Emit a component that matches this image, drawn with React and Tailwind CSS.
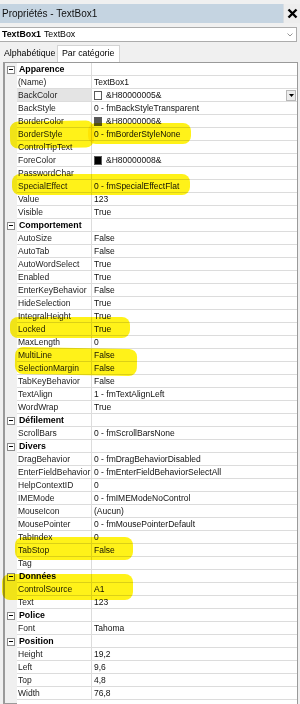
import React from "react";

const sections = [
  {
    title: "Apparence",
    rows: [
      { name: "(Name)", value: "TextBox1" },
      { name: "BackColor", value: "&H80000005&", swatch: "bg-white", shaded: true, dropdown: true },
      { name: "BackStyle", value: "0 - fmBackStyleTransparent" },
      { name: "BorderColor", value: "&H80000006&", swatch: "bg-[#585858]" },
      { name: "BorderStyle", value: "0 - fmBorderStyleNone" },
      { name: "ControlTipText", value: "" },
      { name: "ForeColor", value: "&H80000008&", swatch: "bg-black" },
      { name: "PasswordChar", value: "" },
      { name: "SpecialEffect", value: "0 - fmSpecialEffectFlat" },
      { name: "Value", value: "123" },
      { name: "Visible", value: "True" },
    ],
  },
  {
    title: "Comportement",
    rows: [
      { name: "AutoSize", value: "False" },
      { name: "AutoTab", value: "False" },
      { name: "AutoWordSelect", value: "True" },
      { name: "Enabled", value: "True" },
      { name: "EnterKeyBehavior", value: "False" },
      { name: "HideSelection", value: "True" },
      { name: "IntegralHeight", value: "True" },
      { name: "Locked", value: "True" },
      { name: "MaxLength", value: "0" },
      { name: "MultiLine", value: "False" },
      { name: "SelectionMargin", value: "False" },
      { name: "TabKeyBehavior", value: "False" },
      { name: "TextAlign", value: "1 - fmTextAlignLeft" },
      { name: "WordWrap", value: "True" },
    ],
  },
  {
    title: "Défilement",
    rows: [{ name: "ScrollBars", value: "0 - fmScrollBarsNone" }],
  },
  {
    title: "Divers",
    rows: [
      { name: "DragBehavior", value: "0 - fmDragBehaviorDisabled" },
      { name: "EnterFieldBehavior", value: "0 - fmEnterFieldBehaviorSelectAll" },
      { name: "HelpContextID", value: "0" },
      { name: "IMEMode", value: "0 - fmIMEModeNoControl" },
      { name: "MouseIcon", value: "(Aucun)" },
      { name: "MousePointer", value: "0 - fmMousePointerDefault" },
      { name: "TabIndex", value: "0" },
      { name: "TabStop", value: "False" },
      { name: "Tag", value: "" },
    ],
  },
  {
    title: "Données",
    rows: [
      { name: "ControlSource", value: "A1" },
      { name: "Text", value: "123" },
    ],
  },
  {
    title: "Police",
    rows: [{ name: "Font", value: "Tahoma" }],
  },
  {
    title: "Position",
    rows: [
      { name: "Height", value: "19,2" },
      { name: "Left", value: "9,6" },
      { name: "Top", value: "4,8" },
      { name: "Width", value: "76,8" },
    ],
  },
];

// marker strokes drawn over the grid
const marks = [
  "left-[10px] top-[121px] w-[84px] h-[27px] -rotate-1",
  "left-[88px] top-[123px] w-[103px] h-[21px]",
  "left-[12px] top-[174px] w-[178px] h-[21px]",
  "left-[10px] top-[317px] w-[120px] h-[21px]",
  "left-[15px] top-[348px] w-[122px] h-[27px] rotate-1",
  "left-[15px] top-[537px] w-[118px] h-[23px]",
  "left-[2px] top-[574px] w-[131px] h-[26px]",
];

function Category({ title }) {
  return (
    <div className="flex h-[13px]">
      <div className="flex w-[12px] shrink-0 items-center">
        <div className="ml-[2px] flex h-[8px] w-[8px] items-center justify-center border border-[#8a8a8a] bg-white">
          <div className="h-px w-[4px] bg-black" />
        </div>
      </div>
      <div className="w-[75px] shrink-0 border-b border-r border-[#dcdcdc] bg-white pl-[2px] text-[8.8px] font-bold leading-[12px] text-black">
        {title}
      </div>
      <div className="flex-1 border-b border-[#dcdcdc] bg-white" />
    </div>
  );
}

function Row({ name, value, swatch, shaded, dropdown }) {
  return (
    <div className="flex h-[13px]">
      <div className="w-[12px] shrink-0" />
      <div
        className={`w-[75px] shrink-0 whitespace-nowrap border-b border-r border-[#dcdcdc] pl-[1px] leading-[12px] text-[#222] ${
          shaded ? "bg-[#e4e4e4]" : "bg-white"
        }`}
      >
        {name}
      </div>
      <div className="flex flex-1 items-center whitespace-nowrap border-b border-[#dcdcdc] bg-white pl-[2px] leading-[12px] text-[#111]">
        {swatch && (
          <div className={`mr-[4px] h-[9px] w-[8px] shrink-0 border border-[#5a5a5a] ${swatch}`} />
        )}
        <span className="flex-1">{value}</span>
        {dropdown && (
          <div className="mr-[1px] flex h-[11px] w-[10px] items-center justify-center border border-[#b8b8b8] bg-[#ececec]">
            <svg width="5" height="3" viewBox="0 0 5 3">
              <path d="M0 0h5L2.5 3z" fill="#000" />
            </svg>
          </div>
        )}
      </div>
    </div>
  );
}

export default function App() {
  return (
    <div className="relative flex h-[704px] w-[300px] flex-col overflow-hidden bg-[#f0f0f0] font-['Liberation_Sans',Arial,sans-serif] text-[8.5px] text-black">
      <div className="mt-[4px] flex h-[19px] items-center justify-between bg-[#c5d4e1]">
        <span className="pl-[2px] text-[10px] text-[#111]">Propriétés - TextBox1</span>
        <div className="flex h-full w-[17px] items-center justify-center border-l border-[#d8dde2] bg-[#ededed]">
          <svg width="11" height="11" viewBox="0 0 11 11">
            <path d="M1.5 1.5l8 8M9.5 1.5l-8 8" stroke="#000" strokeWidth="2.4" />
          </svg>
        </div>
      </div>

      <div className="mt-[4px] flex h-[15px] w-[297px] items-center border border-l-0 border-[#acacac] bg-white pl-[2px] text-[8.8px]">
        <span className="font-bold">TextBox1</span>
        <span className="ml-[3px] flex-1">TextBox</span>
        <svg className="mr-[3px]" width="6" height="4" viewBox="0 0 6 4">
          <path d="M0.5 0.5l2.5 2.5l2.5-2.5" stroke="#8a8a8a" fill="none" strokeWidth="0.9" />
        </svg>
      </div>

      <div className="mt-[3px] flex h-[17px] items-end text-[8.8px]">
        <div className="mb-[1px] flex h-[15px] w-[57px] items-center pl-[4px]">Alphabétique</div>
        <div className="flex h-[17px] w-[63px] items-center border border-b-0 border-[#d4d4d4] bg-white pl-[4px]">
          Par catégorie
        </div>
      </div>

      <div className="ml-[3px] w-[295px] flex-1 border border-[#9a9a9a] border-l-2 bg-[#f0f0f0]">
        {sections.map((s) => (
          <div key={s.title}>
            <Category title={s.title} />
            {s.rows.map((r) => (
              <Row key={r.name} {...r} />
            ))}
          </div>
        ))}
        <div className="ml-[12px] h-full bg-white" />
      </div>

      {marks.map((m) => (
        <div
          key={m}
          className={`pointer-events-none absolute rounded-[8px] bg-[#fff100] opacity-90 mix-blend-multiply ${m}`}
        />
      ))}
    </div>
  );
}
